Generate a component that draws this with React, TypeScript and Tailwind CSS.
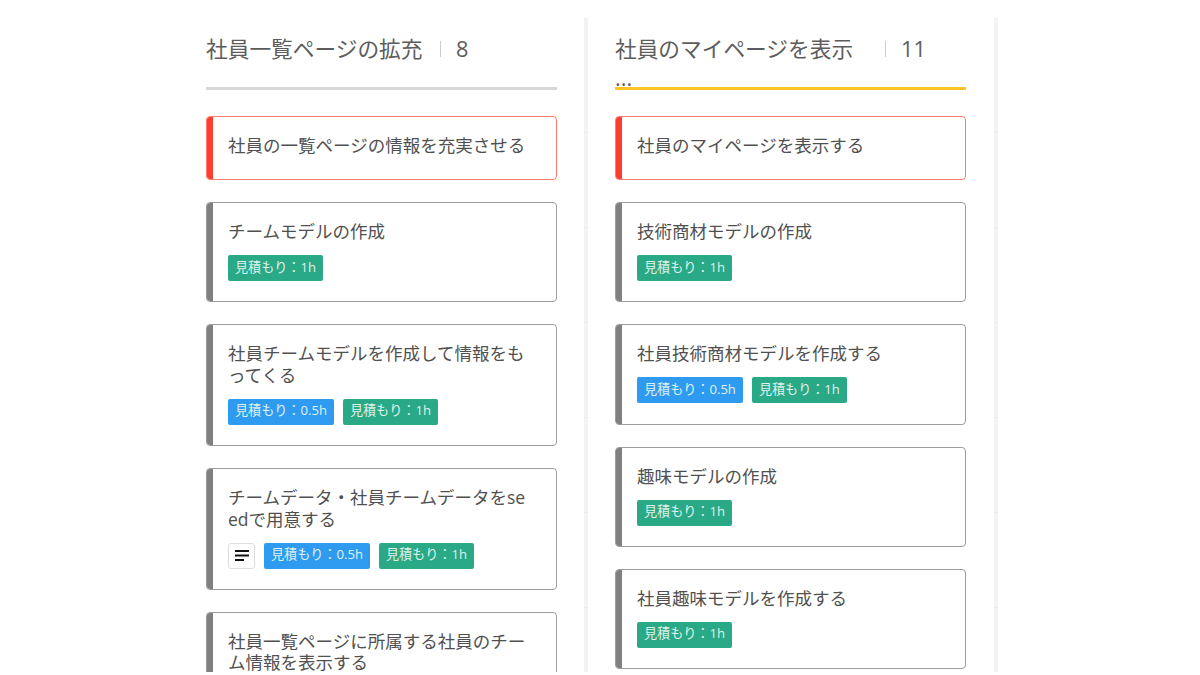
type Card = {
  title: string
  tone?: "red" | "gray"
  memo?: boolean
  half?: boolean
  one?: boolean
}

const leftCards: Card[] = [
  { title: "社員の一覧ページの情報を充実させる", tone: "red" },
  { title: "チームモデルの作成", one: true },
  { title: "社員チームモデルを作成して情報をもってくる", half: true, one: true },
  { title: "チームデータ・社員チームデータをseedで用意する", memo: true, half: true, one: true },
  { title: "社員一覧ページに所属する社員のチーム情報を表示する", one: true },
]

const rightCards: Card[] = [
  { title: "社員のマイページを表示する", tone: "red" },
  { title: "技術商材モデルの作成", one: true },
  { title: "社員技術商材モデルを作成する", half: true, one: true },
  { title: "趣味モデルの作成", one: true },
  { title: "社員趣味モデルを作成する", one: true },
]

function Tag({ color, children }: { color: string; children: string }) {
  return (
    <span className={`flex h-[26px] items-center rounded-[2px] px-[7px] pb-[1px] text-[13.1px] text-[#dff1ec] ${color}`}>
      {children}
    </span>
  )
}

function TaskCard({ title, tone, memo, half, one }: Card) {
  const red = tone === "red"
  return (
    <div
      className={`flex shrink-0 overflow-hidden rounded-[4px] border-[1.5px] bg-white ${
        red ? "border-[#ff7b70]" : "border-[#9c9c9c]"
      }`}
    >
      <div className={`w-[6px] shrink-0 ${red ? "bg-[#ff3d2e]" : "bg-[#808080]"}`} />
      <div className={`flex-1 pl-[15px] pr-[22px] ${red ? "pb-[22.5px] pt-[18px]" : "pb-[20.25px] pt-[18px]"}`}>
        <p className="break-all text-[17.5px] leading-[21.5px] text-[#505050]">{title}</p>
        {one && (
          <div className="mt-[12.5px] flex items-center gap-[9px]">
            {memo && (
              <span className="flex h-[26px] w-[27px] items-center justify-center rounded-[3px] border border-[#dddddd] bg-white">
                <svg width="14" height="11" viewBox="0 0 14 11" fill="#111111">
                  <rect x="0" y="0" width="14" height="2" />
                  <rect x="0" y="4.5" width="14" height="2" />
                  <rect x="0" y="9" width="9" height="2" />
                </svg>
              </span>
            )}
            {half && <Tag color="bg-[#2f9bf0]">見積もり：0.5h</Tag>}
            <Tag color="bg-[#2aa986]">見積もり：1h</Tag>
          </div>
        )}
      </div>
    </div>
  )
}

function Column({
  title,
  count,
  titleWidth,
  line,
  cards,
}: {
  title: string
  count: number
  titleWidth: string
  line: string
  cards: Card[]
}) {
  return (
    <section className="w-[350.6px] shrink-0">
      <header className={`flex h-[72px] items-start border-b-[3px] ${line}`}>
        <div className={`pr-[15px] pt-[16px] text-[21.7px] leading-[29px] text-[#5c5c5c] ${titleWidth}`}>
          {title}
        </div>
        <div className="mt-[23px] h-[16px] w-px bg-[#cccccc]" />
        <div className="ml-[15px] pt-[16px] text-[21.7px] leading-[29px] text-[#5c5c5c]">{count}</div>
      </header>
      <div className="mt-[26px] flex flex-col gap-[22px]">
        {cards.map((c) => (
          <TaskCard key={c.title} {...c} />
        ))}
      </div>
    </section>
  )
}

function Divider({ className }: { className: string }) {
  return (
    <div
      className={`w-[4px] shrink-0 bg-[repeating-linear-gradient(#f3f3f3_0px,#f3f3f3_94px,#ebebeb_94px,#ebebeb_95px)] bg-[position:0_20px] ${className}`}
    />
  )
}

export default function App() {
  return (
    <div className="h-[672px] w-[1200px] overflow-hidden bg-white font-['Open_Sans','Noto_Sans_CJK_JP',sans-serif]">
      <div className="flex h-[654px] translate-y-[18px] pl-[206px]">
        <Column
          title="社員一覧ページの拡充"
          count={8}
          titleWidth="w-[234px]"
          line="border-[#d8d8d8]"
          cards={leftCards}
        />
        <Divider className="ml-[27.4px] mr-[27px]" />
        <Column
          title="社員のマイページを表示 ..."
          count={11}
          titleWidth="w-[270px]"
          line="border-[#ffc526]"
          cards={rightCards}
        />
        <Divider className="ml-[28px]" />
      </div>
    </div>
  )
}
